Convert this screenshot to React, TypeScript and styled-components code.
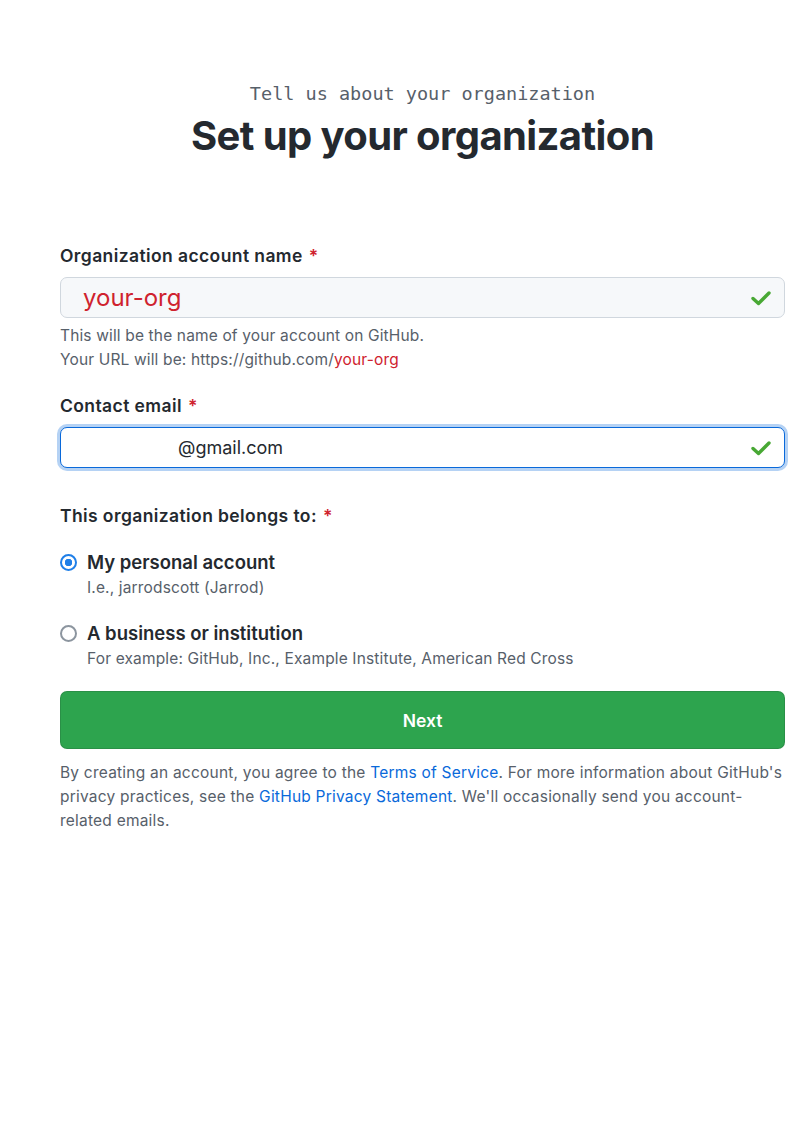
import React from 'react';
import styled, { createGlobalStyle } from 'styled-components';

const GlobalStyle = createGlobalStyle`
  html, body {
    margin: 0;
    padding: 0;
    background: #ffffff;
  }
  body {
    font-family: Inter, "Liberation Sans", Arial, sans-serif;
    color: #24292f;
  }
`;

const Page = styled.div`
  width: 794px;
  min-height: 1123px;
  padding: 82px 9px 0 60px;
  box-sizing: border-box;
`;

const Header = styled.header`
  display: flex;
  flex-direction: column;
  align-items: center;
  margin-bottom: 84px;
`;

const Eyebrow = styled.div`
  font-family: "DejaVu Sans Mono", "Liberation Mono", monospace;
  font-size: 18.5px;
  line-height: 24px;
  color: #57606a;
`;

const Title = styled.h1`
  margin: 6px 0 0;
  font-size: 40px;
  line-height: 48px;
  font-weight: 700;
  letter-spacing: -0.6px;
  color: #24292f;
`;

const Field = styled.div<{ gap?: number }>`
  display: flex;
  flex-direction: column;
  margin-bottom: ${p => p.gap ?? 0}px;
`;

const Label = styled.label`
  font-size: 17.5px;
  line-height: 24px;
  font-weight: 600;
  letter-spacing: 0.4px;
  color: #24292f;
  margin-bottom: 9px;
`;

const Req = styled.span`
  color: #cf222e;
  margin-left: 6px;
`;

const InputBox = styled.div<{ focused?: boolean }>`
  display: flex;
  align-items: center;
  height: 41px;
  box-sizing: border-box;
  border-radius: 7px;
  border: 1px solid ${p => (p.focused ? '#0969da' : '#d0d7de')};
  background: ${p => (p.focused ? '#ffffff' : '#f6f8fa')};
  box-shadow: ${p => (p.focused ? '0 0 0 3px rgba(9, 105, 218, 0.3)' : 'none')};
  padding: 0 12px 0 0;
`;

const Value = styled.span<{ tone: 'red' | 'dark'; indent: number; size: number }>`
  flex: 1;
  padding-left: ${p => p.indent}px;
  font-size: ${p => p.size}px;
  color: ${p => (p.tone === 'red' ? '#cf222e' : '#24292f')};
`;

const Note = styled.p`
  margin: 6px 0 0;
  font-size: 15.5px;
  line-height: 24px;
  letter-spacing: 0.15px;
  color: #57606a;
`;

const RedText = styled.span`
  color: #cf222e;
`;

const Options = styled.div`
  display: flex;
  flex-direction: column;
  gap: 21px;
  margin-top: 13px;
`;

const Option = styled.div`
  display: grid;
  grid-template-columns: 27px 1fr;
  align-items: center;
`;

const Radio = styled.span<{ checked?: boolean }>`
  width: 17px;
  height: 17px;
  border-radius: 50%;
  box-sizing: border-box;
  border: ${p => (p.checked ? '2.5px solid #1f7fe8' : '2px solid #8c959f')};
  background: ${p =>
    p.checked
      ? 'radial-gradient(circle, #1f7fe8 0 3.5px, #ffffff 4px)'
      : '#ffffff'};
`;

const OptionTitle = styled.span`
  font-size: 18.5px;
  line-height: 24px;
  font-weight: 600;
  color: #24292f;
`;

const OptionHint = styled.span`
  grid-column: 2;
  font-size: 15.5px;
  line-height: 24px;
  letter-spacing: 0.15px;
  color: #57606a;
  margin-top: 2px;
`;

const SubmitButton = styled.button`
  margin-top: 20px;
  width: 100%;
  height: 58px;
  border: 1px solid rgba(27, 31, 36, 0.15);
  border-radius: 7px;
  background: #2da44e;
  color: #ffffff;
  font-family: inherit;
  font-size: 17.5px;
  font-weight: 600;
  cursor: pointer;
`;

const Legal = styled.p`
  margin: 12px 0 0;
  font-size: 15.5px;
  line-height: 24px;
  letter-spacing: 0.22px;
  color: #57606a;
`;

const Link = styled.a`
  color: #0969da;
  text-decoration: none;
`;

const Check = () => (
  <svg width="22" height="22" viewBox="0 0 22 22">
    <polyline
      points="3,11.5 8.5,16.5 19,6"
      fill="none"
      stroke="#48a834"
      strokeWidth="3.4"
      strokeLinecap="round"
      strokeLinejoin="round"
    />
  </svg>
);

export default function App() {
  return (
    <Page>
      <GlobalStyle />
      <Header>
        <Eyebrow>Tell us about your organization</Eyebrow>
        <Title>Set up your organization</Title>
      </Header>

      <Field gap={22}>
        <Label>
          Organization account name<Req>*</Req>
        </Label>
        <InputBox>
          <Value tone="red" indent={22} size={24}>your-org</Value>
          <Check />
        </InputBox>
        <Note>
          This will be the name of your account on GitHub.
          <br />
          Your URL will be: https://github.com/<RedText>your-org</RedText>
        </Note>
      </Field>

      <Field gap={36}>
        <Label>
          Contact email<Req>*</Req>
        </Label>
        <InputBox focused>
          <Value tone="dark" indent={117} size={18}>@gmail.com</Value>
          <Check />
        </InputBox>
      </Field>

      <Field>
        <Label>
          This organization belongs to:<Req>*</Req>
        </Label>
        <Options>
          <Option>
            <Radio checked />
            <OptionTitle>My personal account</OptionTitle>
            <OptionHint>I.e., jarrodscott (Jarrod)</OptionHint>
          </Option>
          <Option>
            <Radio />
            <OptionTitle>A business or institution</OptionTitle>
            <OptionHint>For example: GitHub, Inc., Example Institute, American Red Cross</OptionHint>
          </Option>
        </Options>
      </Field>

      <SubmitButton>Next</SubmitButton>

      <Legal>
        By creating an account, you agree to the <Link href="#">Terms of Service</Link>. For
        more information about GitHub's privacy practices, see the{' '}
        <Link href="#">GitHub Privacy Statement</Link>. We'll occasionally send you
        account-related emails.
      </Legal>
    </Page>
  );
}
